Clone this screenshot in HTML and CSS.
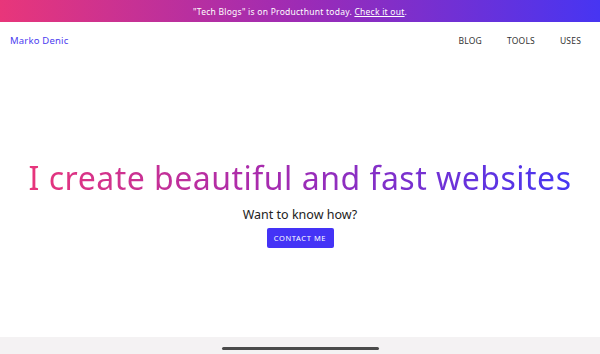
FILE: index.html
```html
<!DOCTYPE html>
<html lang="en">
<head>
<meta charset="utf-8">
<title>Marko Denic</title>
<link rel="stylesheet" href="styles.css">
</head>
<body>
<div class="page">
  <div class="banner">"Tech Blogs" is on Producthunt today. <a class="banner-link" href="#">Check it out</a>.</div>
  <header class="nav">
    <a class="brand" href="#">Marko Denic</a>
    <nav class="links">
      <a class="link" href="#">BLOG</a>
      <a class="link" href="#">TOOLS</a>
      <a class="link" href="#">USES</a>
    </nav>
  </header>
  <main class="hero">
    <h1 class="title">I create beautiful and fast websites</h1>
    <p class="subtitle">Want to know how?</p>
    <a class="button" href="#">CONTACT ME</a>
  </main>
  <footer class="bottom">
    <div class="home-indicator"></div>
  </footer>
</div>
</body>
</html>
```

FILE: styles.css
```css
* { box-sizing: border-box; }
html, body { margin: 0; padding: 0; }
body {
  font-family: "Noto Sans", "DejaVu Sans", sans-serif;
  background: #fff;
  color: #222;
}
.page {
  height: 354px;
  display: flex;
  flex-direction: column;
}
.banner {
  height: 22px;
  display: flex;
  align-items: center;
  justify-content: center;
  background: linear-gradient(90deg, #e8367a 0%, #9d2bb5 50%, #4735f2 100%);
  color: #fff;
  font-size: 8.5px;
  letter-spacing: 0.25px;
  white-space: pre;
}
.banner-link { color: #fff; text-decoration: underline; }
.nav {
  height: 36px;
  display: flex;
  align-items: center;
  justify-content: space-between;
  padding: 0 19px 0 10px;
}
.brand {
  color: #4b3cf0;
  font-size: 9.5px;
  letter-spacing: 0.2px;
  text-decoration: none;
}
.links { display: flex; gap: 25px; }
.link {
  color: #333;
  font-size: 8.5px;
  text-decoration: none;
  letter-spacing: 0.2px;
}
.hero {
  flex: 1;
  display: flex;
  flex-direction: column;
  align-items: center;
  justify-content: flex-start;
  padding-top: 100px;
}
.title {
  margin: 0;
  font-size: 32px;
  font-weight: 400;
  line-height: 40px;
  letter-spacing: 0.5px;
  background: linear-gradient(90deg, #e8357b 0%, #a52bb0 45%, #4536f3 100%);
  -webkit-background-clip: text;
  background-clip: text;
  color: transparent;
}
.subtitle {
  margin: 8px 0 0;
  font-size: 12.5px;
  line-height: 18px;
  color: #222;
}
.button {
  margin-top: 4px;
  width: 67px;
  height: 20px;
  display: flex;
  align-items: center;
  justify-content: center;
  background: #4433f6;
  color: #fff;
  border-radius: 2px;
  font-size: 7.5px;
  letter-spacing: 0.6px;
  text-decoration: none;
}
.bottom {
  height: 17px;
  background: #f4f2f3;
  display: flex;
  justify-content: center;
  align-items: flex-start;
  padding-top: 10px;
}
.home-indicator {
  width: 157px;
  height: 3px;
  border-radius: 2px;
  background: #4a4a4a;
}
```
